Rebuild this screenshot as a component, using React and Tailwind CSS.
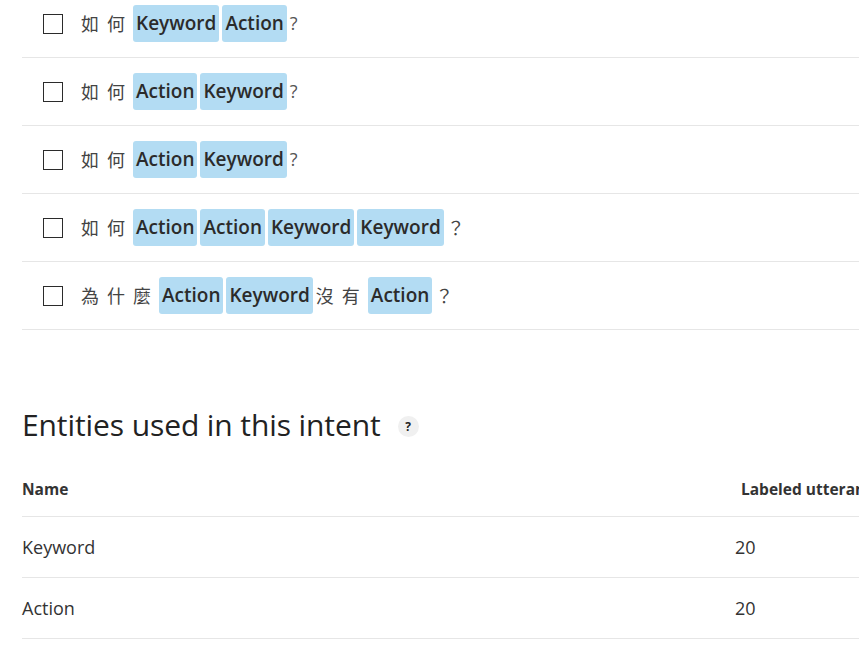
import React from "react";

const utterances = [
  [{ t: "如" }, { t: "何" }, { e: "Keyword" }, { e: "Action" }, { q: "?" }],
  [{ t: "如" }, { t: "何" }, { e: "Action" }, { e: "Keyword" }, { q: "?" }],
  [{ t: "如" }, { t: "何" }, { e: "Action" }, { e: "Keyword" }, { q: "?" }],
  [{ t: "如" }, { t: "何" }, { e: "Action" }, { e: "Action" }, { e: "Keyword" }, { e: "Keyword" }, { t: "？" }],
  [{ t: "為" }, { t: "什" }, { t: "麼" }, { e: "Action" }, { e: "Keyword" }, { t: "沒" }, { t: "有" }, { e: "Action" }, { t: "？" }],
];

const entities = [
  { name: "Keyword", count: 20 },
  { name: "Action", count: 20 },
];

function Token({ tok }) {
  if (tok.e) {
    return (
      <span className="mr-[3px] flex h-[37px] items-center rounded-[3px] bg-[#b3dcf3] px-[3px] text-[19px] font-semibold text-[#2b2b2b]">
        {tok.e}
      </span>
    );
  }
  if (tok.q) {
    return <span className="text-[18px] text-[#555]">{tok.q}</span>;
  }
  return (
    <span className="mr-[8px] w-[18px] text-center text-[18px] text-[#444] [font-family:'Noto_Sans_CJK_TC',sans-serif]">
      {tok.t}
    </span>
  );
}

export default function App() {
  return (
    <div className="min-h-screen overflow-hidden bg-white pl-[22px] text-[#333] [font-family:'Open_Sans','Noto_Sans_CJK_TC',sans-serif]">
      {/* Utterances */}
      <div className="-mt-[10px]">
        {utterances.map((row, i) => (
          <div key={i} className="flex h-[68px] items-center border-b border-[#e6e6e6]">
            <span className="ml-[21px] mr-[18px] h-[20px] w-[20px] border-[1.5px] border-[#2b2b2b] bg-white" />
            {row.map((tok, j) => (
              <Token key={j} tok={tok} />
            ))}
          </div>
        ))}
      </div>

      {/* Entities */}
      <div className="mt-[72px] flex items-center">
        <h2 className="text-[30px] font-normal tracking-[-0.1px] text-[#222]">Entities used in this intent</h2>
        <span className="ml-[17px] mt-[4px] flex h-[21px] w-[21px] items-center justify-center rounded-full bg-[#f0f0f0] text-[12px] font-bold text-[#222]">
          ?
        </span>
      </div>

      <div className="mt-[16px] whitespace-nowrap">
        <div className="grid h-[54px] grid-cols-[713px_1fr] items-center border-b border-[#e6e6e6] text-[15.5px] font-bold text-[#333]">
          <span>Name</span>
          <span className="pl-[6px]">Labeled utterances</span>
        </div>
        {entities.map((e) => (
          <div key={e.name} className="grid h-[61px] grid-cols-[713px_1fr] items-center border-b border-[#e6e6e6] text-[18px] text-[#333]">
            <span>{e.name}</span>
            <span>{e.count}</span>
          </div>
        ))}
      </div>
    </div>
  );
}
